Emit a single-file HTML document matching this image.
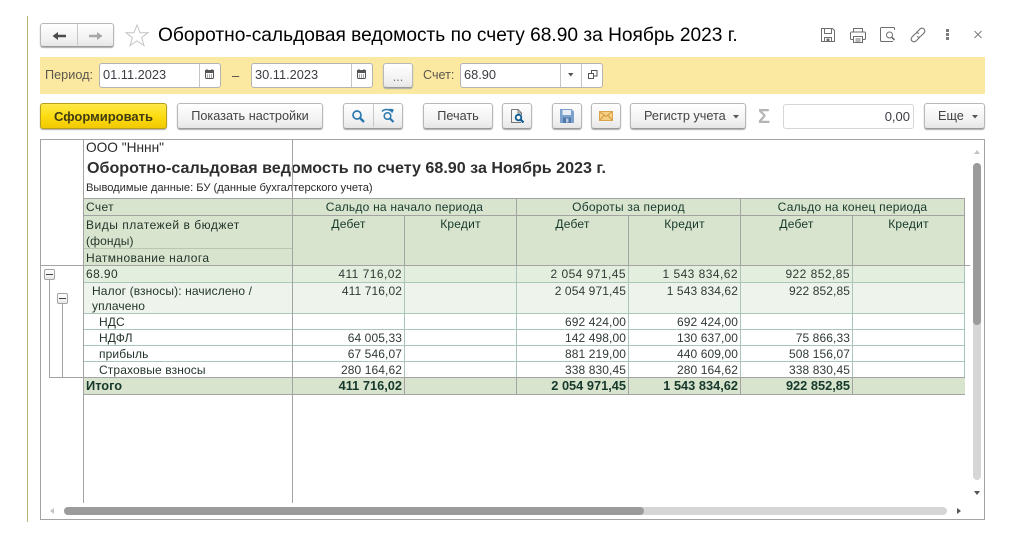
<!DOCTYPE html>
<html><head><meta charset="utf-8"><style>
html,body{margin:0;padding:0;background:#fff;width:1014px;height:540px;overflow:hidden}
body{position:relative;font-family:"Liberation Sans",sans-serif;color:#333}
.a,.t,.r,.c,.b,.l{position:absolute;white-space:nowrap}
.l{background:#a3a3a3}
.g{background:#a9c6bb}
.b{box-sizing:border-box;border:1px solid #b8b8b8;border-bottom-color:#9a9a9a;border-radius:3px;background:linear-gradient(#fff,#f1f1f1 70%,#e6e6e6);box-shadow:0 1px 1px #aaa;font-size:12.7px;line-height:25px;text-align:center;color:#444}
.f{position:absolute;box-sizing:border-box;background:#fff;border:1px solid #b4b4b4;border-radius:3px;font-size:12.8px;line-height:22px;color:#3c3c44;padding-left:3px}
.t{font-size:12px;line-height:16px;color:#23352b;letter-spacing:.12px}
.r{font-size:12px;line-height:16px;color:#2f3a36;text-align:right;letter-spacing:.1px}
.x{letter-spacing:.45px}
.c{font-size:12px;line-height:16px;color:#17392c;text-align:center;letter-spacing:.22px}
.bd{font-weight:bold;color:#17392c;letter-spacing:0;font-size:12.8px}
svg{position:absolute;overflow:visible}
</style></head><body>

<div class="a" style="left:27px;top:16px;width:1px;height:506px;background:#b4b46e"></div>

<!-- nav -->
<div class="b" style="left:40px;top:23px;width:74px;height:24px"></div>
<div class="a" style="left:77px;top:24px;width:1px;height:21px;background:#c8c8c8"></div>
<svg style="left:52px;top:30px" width="16" height="12"><path d="M0.500 6L6 2V4.700H14V7.300H6V10Z" fill="#4a4a4a"/></svg>
<svg style="left:87px;top:30px" width="16" height="12"><path d="M15.500 6L10 2V4.700H2V7.300H10V10Z" fill="#a8a8a8"/></svg>
<svg style="left:125px;top:24px" width="24" height="23"><path d="M12 1L15 8.700H23L16.600 13.600L19 21.500L12 16.800L5 21.500L7.400 13.600L1 8.700H9Z" fill="#fff" stroke="#c4c4c4" stroke-width="1"/></svg>
<div class="a" style="left:158px;top:24px;font-size:19.15px;line-height:24px;color:#000">Оборотно-сальдовая ведомость по счету 68.90 за Ноябрь 2023 г.</div>

<!-- top right icons -->
<svg style="left:820px;top:27px" width="16" height="16" fill="none" stroke="#6e6e6e"><path d="M1.500 1.500H12.500L14.500 3.500V14.500H1.500Z"/><path d="M4.500 1.500V6.500H11.500V1.500M4.500 14.500V10.500H11.500V14.500"/><rect x="6.500" y="11.500" width="3" height="3" fill="#6e6e6e" stroke="none"/></svg>
<svg style="left:850px;top:27px" width="16" height="16" fill="none" stroke="#6e6e6e"><path d="M3.500 5V1.500H12.500V5M3.500 12.500H1.500A1 1 0 0 1 .5 11.500V6A1 1 0 0 1 1.500 5H14.500A1 1 0 0 1 15.500 6V11.500A1 1 0 0 1 14.500 12.500H12.500"/><path d="M3.500 9.500H12.500V15.500H3.500ZM5.500 12H10.500M5.500 14H10.500"/></svg>
<svg style="left:880px;top:27px" width="16" height="16" fill="none" stroke="#6e6e6e"><path d="M14.500 3V1.500A1 1 0 0 0 13.500 .5H1.500A1 1 0 0 0 .5 1.500V13.500A1 1 0 0 0 1.500 14.500H13"/><circle cx="9.500" cy="8" r="3"/><path d="M11.700 10.200L14.500 13" stroke-width="1.600"/></svg>
<svg style="left:910px;top:27px" width="16" height="16" fill="none" stroke="#6e6e6e" stroke-width="1.100"><path d="M6.500 5.500L10 2A2.800 2.800 0 0 1 14 6L10.500 9.500A2.800 2.800 0 0 1 7 9.500"/><path d="M9.500 10.500L6 14A2.800 2.800 0 0 1 2 10L5.500 6.500A2.800 2.800 0 0 1 9 6.500"/></svg>
<svg style="left:945px;top:28px" width="5" height="13" fill="#7a7a7a"><rect x="1" y="1" width="3" height="3"/><rect x="1" y="5" width="3" height="3"/><rect x="1" y="9" width="3" height="3"/></svg>
<svg style="left:974px;top:30px" width="9" height="9" stroke="#7a7a7a" fill="none"><path d="M.5 1L7.500 8M7.500 1L.5 8"/></svg>

<!-- yellow panel -->
<div class="a" style="left:40px;top:57px;width:945px;height:37px;background:#fbe9a1"></div>
<div class="a" style="left:45px;top:65px;font-size:12.7px;line-height:21px;color:#5c5650">Период:</div>
<div class="f" style="left:99px;top:63px;width:122px;height:25px">01.11.2023</div>
<div class="a" style="left:199px;top:64px;width:1px;height:23px;background:#c4c4c4"></div>
<svg style="left:205px;top:69px" width="10" height="11"><rect x=".5" y="1.500" width="8" height="8" rx="1" fill="#fff" stroke="#555"/><rect x="0" y="1" width="9" height="3" fill="#555"/><path d="M2 0V2M7 0V2" stroke="#555"/><path d="M2 6H3M4 6H5M6 6H7M2 8H3M4 8H5M6 8H7" stroke="#555"/></svg>
<div class="a" style="left:232px;top:65px;font-size:13px;line-height:21px;color:#444">–</div>
<div class="f" style="left:251px;top:63px;width:122px;height:25px">30.11.2023</div>
<div class="a" style="left:351px;top:64px;width:1px;height:23px;background:#c4c4c4"></div>
<svg style="left:357px;top:69px" width="10" height="11"><rect x=".5" y="1.500" width="8" height="8" rx="1" fill="#fff" stroke="#555"/><rect x="0" y="1" width="9" height="3" fill="#555"/><path d="M2 0V2M7 0V2" stroke="#555"/><path d="M2 6H3M4 6H5M6 6H7M2 8H3M4 8H5M6 8H7" stroke="#555"/></svg>
<div class="b" style="left:383px;top:63px;width:30px;height:25px;line-height:26px;color:#777">...</div>
<div class="a" style="left:423px;top:65px;font-size:12.6px;line-height:21px;color:#5c5650">Счет:</div>
<div class="f" style="left:460px;top:63px;width:143px;height:25px">68.90</div>
<div class="a" style="left:560px;top:64px;width:1px;height:23px;background:#c4c4c4"></div>
<div class="a" style="left:581px;top:64px;width:1px;height:23px;background:#c4c4c4"></div>
<svg style="left:568px;top:73px" width="6" height="4"><path d="M0 0H5.500L2.750 3.500Z" fill="#555"/></svg>
<svg style="left:588px;top:70px" width="10" height="10" fill="#fff" stroke="#555"><rect x="3.500" y=".5" width="5.500" height="5.500"/><rect x=".5" y="3.500" width="5" height="5"/></svg>

<!-- toolbar -->
<div class="b" style="left:40px;top:103px;width:127px;height:26px;line-height:25px;background:linear-gradient(#ffe94a,#fcdc12 50%,#f2c900);border-color:#b79e1c;color:#413c14;font-weight:bold;font-size:13px">Сформировать</div>
<div class="b" style="left:177px;top:103px;width:146px;height:26px">Показать настройки</div>
<div class="b" style="left:343px;top:103px;width:60px;height:26px"></div>
<div class="a" style="left:373px;top:104px;width:1px;height:23px;background:#c8c8c8"></div>
<svg style="left:351px;top:109px" width="15" height="15" fill="none" stroke="#2a78ae" stroke-width="1.700"><circle cx="6" cy="6" r="4"/><path d="M9 9L13 13" stroke-width="2.400"/></svg>
<svg style="left:381px;top:108px" width="15" height="16" fill="none" stroke="#2a78ae" stroke-width="1.500"><path d="M1 3.500A6 5 0 0 1 10 3"/><path d="M8.500 .5L13 1.500L11 5.500Z" fill="#2a78ae" stroke="none"/><circle cx="6.500" cy="8" r="3.300"/><path d="M9 10.500L12.500 14" stroke-width="2.200"/></svg>
<div class="b" style="left:423px;top:103px;width:70px;height:26px">Печать</div>
<div class="b" style="left:502px;top:103px;width:30px;height:26px"></div>
<svg style="left:511px;top:109px" width="15" height="15" fill="none"><path d="M.5 .5H7L10.500 4V6M10 13.500H.5V.5" stroke="#777"/><path d="M7 .5V4H10.500" stroke="#777"/><circle cx="7.500" cy="8.500" r="2.800" stroke="#0f5c8e" stroke-width="1.800"/><path d="M9.500 10.500L12.500 13.500" stroke="#0f5c8e" stroke-width="2.200"/></svg>
<div class="b" style="left:552px;top:103px;width:30px;height:26px"></div>
<svg style="left:560px;top:109px" width="14" height="14"><path d="M0 0H11.500L14 2.500V14H0Z" fill="#7da1cd"/><rect x="2.500" y="1" width="8.500" height="5" fill="#e6edf5"/><rect x="3" y="8.500" width="8" height="5.500" fill="#4f77a8"/><rect x="6" y="9.500" width="2.500" height="4" fill="#b7cbe2"/></svg>
<div class="b" style="left:591px;top:103px;width:30px;height:26px"></div>
<svg style="left:599px;top:111px" width="14" height="10"><rect x=".5" y=".5" width="13" height="9" fill="#f7cf85" stroke="#d9a44a"/><path d="M.5 .5L7 5.500L13.500 .5M.5 9.500L5 4.500M13.500 9.500L9 4.500" fill="none" stroke="#d09a3e"/></svg>
<div class="b" style="left:630px;top:103px;width:116px;height:26px;text-align:left;padding-left:13px">Регистр учета</div>
<svg style="left:733px;top:115px" width="7" height="4"><path d="M0 0H6L3 3.500Z" fill="#555"/></svg>
<div class="a" style="left:758px;top:108px;font-size:20px;line-height:18px;font-weight:bold;color:#b5b5b5">Σ</div>
<div class="a" style="left:783px;top:104px;width:131px;height:25px;box-sizing:border-box;border:1px solid #d6d6d6;border-radius:3px;background:#fff;text-align:right;font-size:13px;line-height:23px;padding-right:3px;color:#3c3c44">0,00</div>
<div class="b" style="left:924px;top:103px;width:61px;height:26px;text-align:left;padding-left:13px">Еще</div>
<svg style="left:972px;top:115px" width="7" height="4"><path d="M0 0H6L3 3.500Z" fill="#555"/></svg>

<!-- frame -->
<div class="a" style="left:40px;top:139px;width:943px;height:379px;border:1px solid #a3a3a3"></div>
<div class="l" style="left:83px;top:140px;width:1px;height:363px"></div>

<!-- heading -->
<div class="t" style="left:86px;top:140px;color:#2a2a2a;font-size:13.7px;letter-spacing:0">ООО "Нннн"</div>
<div class="a" style="left:87px;top:158px;font-size:16.1px;line-height:20px;font-weight:bold;color:#2e2e2e">Оборотно-сальдовая ведомость по счету 68.90 за Ноябрь 2023 г.</div>
<div class="a" style="left:86px;top:181px;font-size:11.15px;line-height:14px;color:#2a2a2a">Выводимые данные: БУ (данные бухгалтерского учета)</div>

<!-- header -->
<div class="a" style="left:84px;top:198px;width:881px;height:67px;background:#d8e4cd"></div>
<div class="a" style="left:84px;top:266px;width:881px;height:16px;background:#e4eedf"></div>
<div class="a" style="left:84px;top:283px;width:881px;height:30px;background:#eef4ec"></div>
<div class="a" style="left:84px;top:378px;width:881px;height:16px;background:#d8e4cd"></div>

<!-- data lines -->
<div class="g a" style="left:84px;top:282px;width:881px;height:1px"></div>
<div class="g a" style="left:84px;top:313px;width:881px;height:1px"></div>
<div class="g a" style="left:84px;top:329px;width:881px;height:1px"></div>
<div class="g a" style="left:84px;top:345px;width:881px;height:1px"></div>
<div class="g a" style="left:84px;top:361px;width:881px;height:1px"></div>
<div class="g a" style="left:404px;top:266px;width:1px;height:111px"></div>
<div class="g a" style="left:516px;top:266px;width:1px;height:111px"></div>
<div class="g a" style="left:628px;top:266px;width:1px;height:111px"></div>
<div class="g a" style="left:740px;top:266px;width:1px;height:111px"></div>
<div class="g a" style="left:852px;top:266px;width:1px;height:111px"></div>
<div class="g a" style="left:964px;top:266px;width:1px;height:111px"></div>

<!-- header lines -->
<div class="l" style="left:84px;top:198px;width:881px;height:1px"></div>
<div class="l" style="left:84px;top:215px;width:881px;height:1px"></div>
<div class="l" style="left:84px;top:248px;width:208px;height:1px;background:#b9c6b4"></div>
<div class="l" style="left:41px;top:265px;width:929px;height:1px"></div>
<div class="l" style="left:84px;top:377px;width:881px;height:1px"></div>
<div class="l" style="left:84px;top:394px;width:881px;height:1px"></div>
<div class="l" style="left:292px;top:140px;width:1px;height:363px"></div>
<div class="l" style="left:516px;top:198px;width:1px;height:67px"></div>
<div class="l" style="left:740px;top:198px;width:1px;height:67px"></div>
<div class="l" style="left:964px;top:198px;width:1px;height:67px"></div>
<div class="l" style="left:404px;top:215px;width:1px;height:50px"></div>
<div class="l" style="left:628px;top:215px;width:1px;height:50px"></div>
<div class="l" style="left:852px;top:215px;width:1px;height:50px"></div>
<div class="l" style="left:404px;top:377px;width:1px;height:17px"></div>
<div class="l" style="left:516px;top:377px;width:1px;height:17px"></div>
<div class="l" style="left:628px;top:377px;width:1px;height:17px"></div>
<div class="l" style="left:740px;top:377px;width:1px;height:17px"></div>
<div class="l" style="left:852px;top:377px;width:1px;height:17px"></div>

<!-- header text -->
<div class="t" style="left:86px;top:199px;letter-spacing:.35px">Счет</div>
<div class="t" style="left:86px;top:217px;letter-spacing:.52px">Виды платежей в бюджет</div>
<div class="t" style="left:86px;top:233px">(фонды)</div>
<div class="t" style="left:86px;top:250px;letter-spacing:.4px">Натмнование налога</div>
<div class="c" style="left:293px;top:199px;width:223px">Сальдо на начало периода</div>
<div class="c" style="left:517px;top:199px;width:223px">Обороты за период</div>
<div class="c" style="left:741px;top:199px;width:223px">Сальдо на конец периода</div>
<div class="c" style="left:293px;top:216px;width:111px">Дебет</div>
<div class="c" style="left:405px;top:216px;width:111px">Кредит</div>
<div class="c" style="left:517px;top:216px;width:111px">Дебет</div>
<div class="c" style="left:629px;top:216px;width:111px">Кредит</div>
<div class="c" style="left:741px;top:216px;width:111px">Дебет</div>
<div class="c" style="left:853px;top:216px;width:111px">Кредит</div>

<!-- rows text -->
<div class="t" style="left:86px;top:266px;letter-spacing:.4px">68.90</div>
<div class="r x" style="right:612px;top:266px">411 716,02</div>
<div class="r x" style="right:388px;top:266px">2 054 971,45</div>
<div class="r x" style="right:276px;top:266px">1 543 834,62</div>
<div class="r x" style="right:164px;top:266px">922 852,85</div>

<div class="t" style="left:92px;top:283px">Налог (взносы): начислено /</div>
<div class="t" style="left:92px;top:298px">уплачено</div>
<div class="r" style="right:612px;top:283px">411 716,02</div>
<div class="r" style="right:388px;top:283px">2 054 971,45</div>
<div class="r" style="right:276px;top:283px">1 543 834,62</div>
<div class="r" style="right:164px;top:283px">922 852,85</div>

<div class="t" style="left:99px;top:314px">НДС</div>
<div class="r" style="right:388px;top:314px">692 424,00</div>
<div class="r" style="right:276px;top:314px">692 424,00</div>

<div class="t" style="left:99px;top:330px">НДФЛ</div>
<div class="r" style="right:612px;top:330px">64 005,33</div>
<div class="r" style="right:388px;top:330px">142 498,00</div>
<div class="r" style="right:276px;top:330px">130 637,00</div>
<div class="r" style="right:164px;top:330px">75 866,33</div>

<div class="t" style="left:99px;top:346px">прибыль</div>
<div class="r" style="right:612px;top:346px">67 546,07</div>
<div class="r" style="right:388px;top:346px">881 219,00</div>
<div class="r" style="right:276px;top:346px">440 609,00</div>
<div class="r" style="right:164px;top:346px">508 156,07</div>

<div class="t" style="left:99px;top:362px">Страховые взносы</div>
<div class="r" style="right:612px;top:362px">280 164,62</div>
<div class="r" style="right:388px;top:362px">338 830,45</div>
<div class="r" style="right:276px;top:362px">280 164,62</div>
<div class="r" style="right:164px;top:362px">338 830,45</div>

<div class="t bd" style="left:86px;top:378px">Итого</div>
<div class="r bd" style="right:612px;top:378px">411 716,02</div>
<div class="r bd" style="right:388px;top:378px">2 054 971,45</div>
<div class="r bd" style="right:276px;top:378px">1 543 834,62</div>
<div class="r bd" style="right:164px;top:378px">922 852,85</div>

<!-- tree -->
<div class="a" style="left:49px;top:279px;width:1px;height:98px;background:#a3a3a3"></div>
<div class="a" style="left:62px;top:304px;width:1px;height:73px;background:#a3a3a3"></div>
<div class="a" style="left:49px;top:377px;width:35px;height:1px;background:#a3a3a3"></div>
<div class="a" style="left:44px;top:269px;width:11px;height:11px;box-sizing:border-box;border:1px solid #a3a3a3;border-radius:2px;background:linear-gradient(#fff,#e8e8e8)"></div>
<div class="a" style="left:46px;top:274px;width:7px;height:1px;background:#444"></div>
<div class="a" style="left:57px;top:293px;width:11px;height:11px;box-sizing:border-box;border:1px solid #a3a3a3;border-radius:2px;background:linear-gradient(#fff,#e8e8e8)"></div>
<div class="a" style="left:59px;top:298px;width:7px;height:1px;background:#444"></div>

<!-- scrollbars -->
<div class="a" style="left:973px;top:163px;width:8px;height:317px;border-radius:4px;background:#d6d6d6"></div>
<div class="a" style="left:973px;top:163px;width:8px;height:162px;border-radius:4px;background:#9b9b9b"></div>
<svg style="left:974px;top:150px" width="7" height="4"><path d="M0 4H6L3 0Z" fill="#c4c4c4"/></svg>
<svg style="left:974px;top:491px" width="7" height="4"><path d="M0 0H6L3 4Z" fill="#555"/></svg>
<div class="a" style="left:64px;top:507px;width:883px;height:8px;border-radius:4px;background:#d6d6d6"></div>
<div class="a" style="left:64px;top:507px;width:580px;height:8px;border-radius:4px;background:#9b9b9b"></div>
<svg style="left:50px;top:508px" width="4" height="6"><path d="M4 0V6L0 3Z" fill="#c4c4c4"/></svg>
<svg style="left:957px;top:508px" width="4" height="6"><path d="M0 0V6L4 3Z" fill="#555"/></svg>
</body></html>
